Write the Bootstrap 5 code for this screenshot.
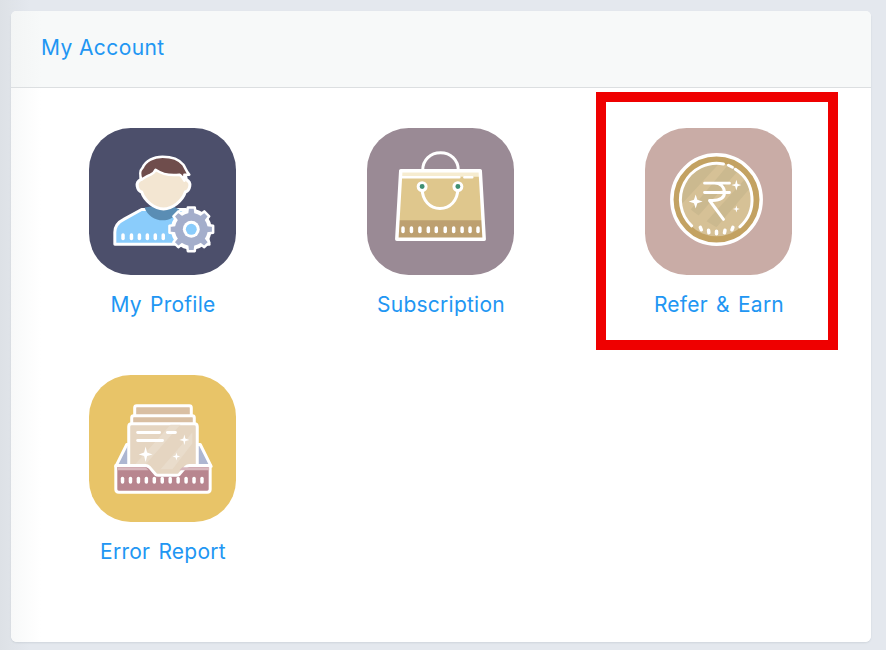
<!DOCTYPE html>
<html lang="en">
<head>
    <meta charset="UTF-8">
    <meta name="viewport" content="width=device-width, initial-scale=1.0">
    <title>My Account</title>
    <link rel="stylesheet" href="https://cdn.jsdelivr.net/npm/bootstrap@5.3.0/dist/css/bootstrap.min.css">
    <style>
        html, body { height: 100%; }
        body {
            background: linear-gradient(90deg, #dde1e6 0, #e4e8ee 30px);
            font-family: "Inter", "Noto Sans", sans-serif;
            overflow: hidden;
        }
        .page-wrap { padding: 11px 15px 8px 11px; height: 650px; }
        .account-card {
            height: 100%;
            border: 0;
            border-radius: 6px;
            box-shadow: 0 1px 2px rgba(60, 70, 90, .12);
        }
        .account-card .card-header {
            height: 77px;
            padding: 0 30px;
            background: linear-gradient(90deg, #f3f5f5 0, #f7f9f9 30px);
            border-bottom: 1px solid #dcdfe1;
            font-size: 21px;
            letter-spacing: .4px;
            line-height: 74px;
            color: #2196f3;
        }
        .account-card .card-body {
            padding: 0 13px;
            background: linear-gradient(90deg, #f8f9f9 0, #fff 30px);
            border-radius: 0 0 6px 6px;
        }
        .tile-col {
            position: relative;
            height: 247px;
            padding-top: 40px;
            text-align: center;
        }
        .tile-link {
            color: #2196f3;
            font-size: 21px;
            letter-spacing: .25px;
            word-spacing: 2px;
            line-height: 24px;
            text-decoration: none;
            display: block;
        }
        .tile-icon { display: block; width: 147px; height: 147px; margin: 0 auto 18px; }
        .red-mark {
            position: absolute;
            left: 16px;
            top: 4px;
            width: 242px;
            height: 258px;
            border: 10px solid #ef0000;
            pointer-events: none;
        }
    </style>
</head>
<body>
    <div class="page-wrap">
        <div class="card account-card">
            <div class="card-header">My Account</div>
            <div class="card-body">
                <div class="row g-0">

                    <!-- My Profile -->
                    <div class="col-4 tile-col">
                        <a href="#" class="tile-link">
                            <svg class="tile-icon" viewBox="0 0 148 148">
                                <rect width="148" height="148" rx="42" fill="#4c4f6b"/>
                                <path d="M26 117V105c0-6 3-10 9-13l18-10h44l18 8 6 27z" fill="#8accfb" stroke="#fff" stroke-width="3" stroke-linejoin="round"/>
                                <path d="M56 80c2 8 11 13 18 13s15-4 17-11l-6-3H62z" fill="#5a8db4"/>
                                <g fill="#fff">
                                    <rect x="32.500" y="106" width="3.500" height="7" rx="1.700"/><rect x="41" y="106" width="3.500" height="7" rx="1.700"/>
                                    <rect x="49" y="106" width="3.500" height="7" rx="1.700"/><rect x="57" y="106" width="3.500" height="7" rx="1.700"/>
                                    <rect x="65" y="106" width="3.500" height="7" rx="1.700"/><rect x="73" y="106" width="3.500" height="7" rx="1.700"/>
                                </g>
                                <path d="M52 52c-2 1-4 3-3.500 6.500.5 3 2.500 5.500 4.500 6 3 9 13 17 22 17s19-8 22-17c2-.5 4-3 4.500-6 .5-3.500-1.500-5.500-3.500-6.500l-2-10H54z" fill="#f3e6d2" stroke="#fff" stroke-width="3" stroke-linejoin="round"/>
                                <path d="M53 52c-2-4-2-9 1-12 3-7 11-11 20-11 10 0 17 3 21 8 2 3 3 7 6 10l-5 0 0 6c-2-4-3-5-5-6-7 1-15 1-24-5-1 3-3 4-5 5-3 1-6 3-9 5z" fill="#6f4d4c" stroke="#fff" stroke-width="2.500" stroke-linejoin="round"/>
                                <g transform="translate(103 102)">
                                    <circle r="17" fill="#a4aecb" stroke="#fff" stroke-width="7"/>
                                    <g fill="#a4aecb" stroke="#fff" stroke-width="2.500" stroke-linejoin="round">
                                        <path d="M-3.500-22h7l1 8h-9z"/>
                                        <path d="M-3.500-22h7l1 8h-9z" transform="rotate(45)"/>
                                        <path d="M-3.500-22h7l1 8h-9z" transform="rotate(90)"/>
                                        <path d="M-3.500-22h7l1 8h-9z" transform="rotate(135)"/>
                                        <path d="M-3.500-22h7l1 8h-9z" transform="rotate(180)"/>
                                        <path d="M-3.500-22h7l1 8h-9z" transform="rotate(225)"/>
                                        <path d="M-3.500-22h7l1 8h-9z" transform="rotate(270)"/>
                                        <path d="M-3.500-22h7l1 8h-9z" transform="rotate(315)"/>
                                    </g>
                                    <circle r="16.500" fill="#a4aecb"/>
                                    <circle r="8.500" fill="#fff"/>
                                    <circle r="5.500" fill="#8accfb"/>
                                </g>
                            </svg>
                            My Profile
                        </a>
                    </div>

                    <!-- Subscription -->
                    <div class="col-4 tile-col">
                        <a href="#" class="tile-link">
                            <svg class="tile-icon" viewBox="0 0 148 148">
                                <rect width="148" height="148" rx="42" fill="#9a8a95"/>
                                <path d="M56 43c0-11 8-18 18-18s18 7 18 18" fill="none" stroke="#fff" stroke-width="3"/>
                                <path d="M34 43h80l4 68H30z" fill="#dfc78d"/>
                                <path d="M31.500 93h85l1 18h-87z" fill="#bda070"/>
                                <path d="M34 43h80v6H34z" fill="#f6ecd0"/>
                                <path d="M35 49.500h58M98 49.500h8" stroke="#fff" stroke-width="2.500" stroke-linecap="round"/>
                                <path d="M34 43h80l4 69H30z" fill="none" stroke="#fff" stroke-width="3.500" stroke-linejoin="round"/>
                                <path d="M55.500 61c0 12 8 20 18 20s18-8 18-20" fill="none" stroke="#fff" stroke-width="3"/>
                                <circle cx="55.500" cy="59" r="4" fill="#3f8f73" stroke="#fff" stroke-width="3"/>
                                <circle cx="91.500" cy="59" r="4" fill="#3f8f73" stroke="#fff" stroke-width="3"/>
                                <g fill="#fff">
                                    <rect x="34.500" y="99" width="3.500" height="7" rx="1.700"/><rect x="43" y="99" width="3.500" height="7" rx="1.700"/>
                                    <rect x="51.500" y="99" width="3.500" height="7" rx="1.700"/><rect x="60" y="99" width="3.500" height="7" rx="1.700"/>
                                    <rect x="68" y="99" width="3.500" height="7" rx="1.700"/><rect x="77" y="99" width="3.500" height="7" rx="1.700"/>
                                    <rect x="85.500" y="99" width="3.500" height="7" rx="1.700"/><rect x="94" y="99" width="3.500" height="7" rx="1.700"/>
                                    <rect x="102" y="99" width="3.500" height="7" rx="1.700"/><rect x="110" y="99" width="3.500" height="7" rx="1.700"/>
                                </g>
                            </svg>
                            Subscription
                        </a>
                    </div>

                    <!-- Refer & Earn -->
                    <div class="col-4 tile-col">
                        <a href="#" class="tile-link">
                            <svg class="tile-icon" viewBox="0 0 148 148">
                                <defs>
                                    <clipPath id="coin-clip"><circle cx="72" cy="72" r="37"/></clipPath>
                                </defs>
                                <rect width="148" height="148" rx="42" fill="#c9aca6"/>
                                <circle cx="72" cy="72" r="45" fill="#c3a262" stroke="#fff" stroke-width="3.500"/>
                                <circle cx="72" cy="72" r="37" fill="#d6c196"/>
                                <g clip-path="url(#coin-clip)" fill="#cbb98f">
                                    <path d="M30 30h50L30 84z"/>
                                    <path d="M88 32l12 4-46 52-8-6zM100 52l8 6-36 42-10-6z"/>
                                </g>
                                <path d="M47 98.500A36.500 36.500 0 0 1 79 36.200M84 37.500l4 2M91 41.500A36.500 36.500 0 0 1 95.500 99.500" fill="none" stroke="#fff" stroke-width="3" stroke-linecap="round"/>
                                <path d="M55.700 100l1 2.500M64 103l.300 2.500M72 104v2.500M80.500 103l-.500 2.500M88.500 100l-1 2.500" stroke="#fff" stroke-width="3.500" stroke-linecap="round"/>
                                <path d="M60 55.500h25M60 65h25M70 55.500c6 0 10 4 10 9.500s-5 8-12 8h-3l14 19" fill="none" stroke="#fff" stroke-width="3" stroke-linecap="round" stroke-linejoin="round"/>
                                <g fill="#fff">
                                    <path d="M51 67l1.700 5.300 5.300 1.700-5.300 1.700-1.700 5.300-1.700-5.300-5.300-1.700 5.300-1.700z"/>
                                    <path d="M92 52l1.200 4.300 3.800 1.200-3.800 1.200-1.200 4.300-1.200-4.300-3.800-1.200 3.800-1.200z"/>
                                    <path d="M92 78l.800 2.700 2.700.800-2.700.800-.800 2.700-.800-2.700-2.700-.800 2.700-.800z"/>
                                </g>
                            </svg>
                            Refer &amp; Earn
                        </a>
                        <div class="red-mark"></div>
                    </div>

                    <!-- Error Report -->
                    <div class="col-4 tile-col">
                        <a href="#" class="tile-link">
                            <svg class="tile-icon" viewBox="0 0 148 148">
                                <rect width="148" height="148" rx="42" fill="#e8c468"/>
                                <path d="M38 70L27 92h96L112 70z" fill="#adb6d1" stroke="#fff" stroke-width="3" stroke-linejoin="round"/>
                                <rect x="46" y="31" width="57" height="24" rx="2" fill="#d9bfa3" stroke="#fff" stroke-width="3"/>
                                <rect x="43" y="41" width="63" height="24" rx="2" fill="#d9bfa3" stroke="#fff" stroke-width="3"/>
                                <path d="M40 106V52c0-2 1-3 3-3h63c2 0 3 1 3 3v54z" fill="#e5d5c1" stroke="#fff" stroke-width="3"/>
                                <path d="M42 95l40-45h10L50 98zM72 95l32-37v11L84 95z" fill="#e9dccb"/>
                                <path d="M49 58h22M79 58h8M49 66h25" stroke="#fff" stroke-width="3" stroke-linecap="round"/>
                                <g fill="#fff">
                                    <path d="M57 72l1.500 6 5.500 2-5.500 1.500-1.500 6-1.500-6-5.500-1.500 5.500-2z"/>
                                    <path d="M96 60l1 4 4 1.500-4 1-1 4-1-4-4-1 4-1.500z"/>
                                    <path d="M88 78l.800 3 3 1-3 1-.800 3-.800-3-3-1 3-1z"/>
                                </g>
                                <path d="M27 91h30c2 0 3 1 4 2l6 7c1 1 2 1 3 1h18c1 0 2 0 3-1l6-7c1-1 2-2 4-2h21v24c0 2-1 3-3 3H30c-2 0-3-1-3-3z" fill="#b8868f" stroke="#fff" stroke-width="3" stroke-linejoin="round"/>
                                <path d="M29 93h28l3 3H29zM91 96l3-3h27v3z" fill="#d8b7bd"/>
                                <g fill="#fff">
                                    <rect x="32" y="102.500" width="3.500" height="7" rx="1.700"/><rect x="40" y="102.500" width="3.500" height="7" rx="1.700"/>
                                    <rect x="48" y="102.500" width="3.500" height="7" rx="1.700"/><rect x="56" y="102.500" width="3.500" height="7" rx="1.700"/>
                                    <rect x="64" y="102.500" width="3.500" height="7" rx="1.700"/><rect x="72" y="102.500" width="3.500" height="7" rx="1.700"/>
                                    <rect x="80" y="102.500" width="3.500" height="7" rx="1.700"/><rect x="88" y="102.500" width="3.500" height="7" rx="1.700"/>
                                    <rect x="96" y="102.500" width="3.500" height="7" rx="1.700"/><rect x="104" y="102.500" width="3.500" height="7" rx="1.700"/>
                                    <rect x="112" y="102.500" width="3.500" height="7" rx="1.700"/>
                                </g>
                            </svg>
                            Error Report
                        </a>
                    </div>

                </div>
            </div>
        </div>
    </div>
    <script src="https://cdn.jsdelivr.net/npm/bootstrap@5.3.0/dist/js/bootstrap.bundle.min.js"></script>
</body>
</html>
